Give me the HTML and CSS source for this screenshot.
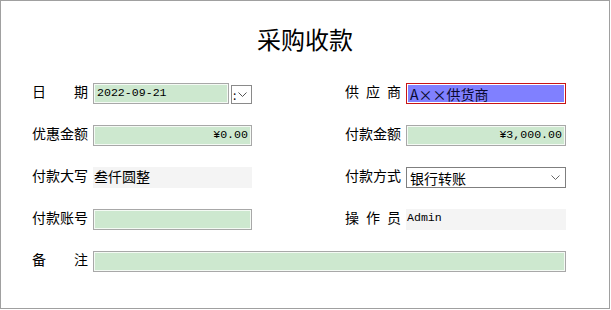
FILE: index.html
```html
<!DOCTYPE html>
<html lang="zh-CN">
<head>
  <meta charset="UTF-8">
  <title>采购收款</title>
  <link rel="stylesheet" href="styles.css">
</head>
<body>
  <div class="window">
    <h1 class="title">采购收款</h1>

    <div class="form">
      <div class="pair">
        <span class="label">日 期</span>
        <div class="date">
          <span class="field green mono">2022-09-21</span>
          <span class="spin">:<svg width="9" height="5" viewBox="0 0 9 5"><path d="M0.5 0.5 L4.5 4.5 L8.5 0.5" fill="none" stroke="#555" stroke-width="1"/></svg></span>
        </div>
      </div>
      <div class="pair">
        <span class="label">供 应 商</span>
        <span class="field picked">A××供货商</span>
      </div>

      <div class="pair">
        <span class="label">优惠金额</span>
        <span class="field green mono amount">¥0.00</span>
      </div>
      <div class="pair">
        <span class="label">付款金额</span>
        <span class="field green mono amount">¥3,000.00</span>
      </div>

      <div class="pair">
        <span class="label">付款大写</span>
        <span class="field plain">叁仟圆整</span>
      </div>
      <div class="pair">
        <span class="label">付款方式</span>
        <span class="field select">银行转账<svg width="9" height="5" viewBox="0 0 9 5"><path d="M0.5 0.5 L4.5 4.5 L8.5 0.5" fill="none" stroke="#666" stroke-width="1"/></svg></span>
      </div>

      <div class="pair">
        <span class="label">付款账号</span>
        <span class="field green"></span>
      </div>
      <div class="pair">
        <span class="label">操 作 员</span>
        <span class="field plain mono">Admin</span>
      </div>

      <div class="pair wide">
        <span class="label">备 注</span>
        <span class="field green"></span>
      </div>
    </div>
  </div>
</body>
</html>
```

FILE: styles.css
```css
body {
  margin: 0;
  background: #fff;
  font-family: "Noto Sans CJK SC", "Noto Sans", sans-serif;
  color: #000;
}
.window {
  width: 610px;
  height: 309px;
  box-sizing: border-box;
  border: 1px solid #a0a0a0;
  padding: 22px 0 0 31px;
}
.title {
  margin: 0 0 28px;
  font-size: 24px;
  font-weight: normal;
  line-height: 32px;
  text-align: center;
  padding-right: 31px;
}
.form {
  display: grid;
  grid-template-columns: 220px 221px;
  column-gap: 93px;
  row-gap: 21px;
}
.pair {
  display: flex;
  align-items: center;
  gap: 5px;
  height: 21px;
}
.pair.wide {
  grid-column: 1 / -1;
  width: 534px;
}
.label {
  width: 56px;
  flex: none;
  font-size: 14px;
  line-height: 16px;
  text-align: justify;
  text-align-last: justify;
  white-space: nowrap;
  padding-bottom: 6px;
}
.field {
  flex: 1;
  height: 21px;
  box-sizing: border-box;
  display: flex;
  align-items: center;
  padding: 0 3px;
  font-size: 14px;
  white-space: nowrap;
  overflow: hidden;
}
.green {
  background: #cde8cf;
  border: 1px solid #a8a8a8;
  box-shadow: inset 0 0 0 1px #f4faf4;
}
.mono {
  font-family: "Liberation Mono", "DejaVu Sans Mono", monospace;
  font-size: 11.6px;
  padding-bottom: 2px;
}
.amount {
  justify-content: flex-end;
}
.plain {
  background: #f4f4f4;
  padding: 0 1px 4px;
}
.picked {
  background: #8080ff;
  border: 1px solid #c81414;
  box-shadow: inset 0 0 0 1px #fff;
  color: #0a0a30;
}
.select {
  background: #fff;
  border: 1px solid #7f7f7f;
  justify-content: space-between;
  padding-right: 5px;
}
.date {
  flex: 1;
  display: flex;
  gap: 2px;
  align-items: flex-start;
  height: 21px;
}
.date .field {
  flex: none;
  width: 136px;
}
.spin {
  width: 21px;
  height: 19px;
  margin-top: 2px;
  box-sizing: border-box;
  border: 1px solid #8a8a8a;
  background: #fff;
  display: flex;
  align-items: center;
  gap: 2px;
  font-size: 12px;
  line-height: 1;
  padding-left: 1px;
  overflow: hidden;
}
```
